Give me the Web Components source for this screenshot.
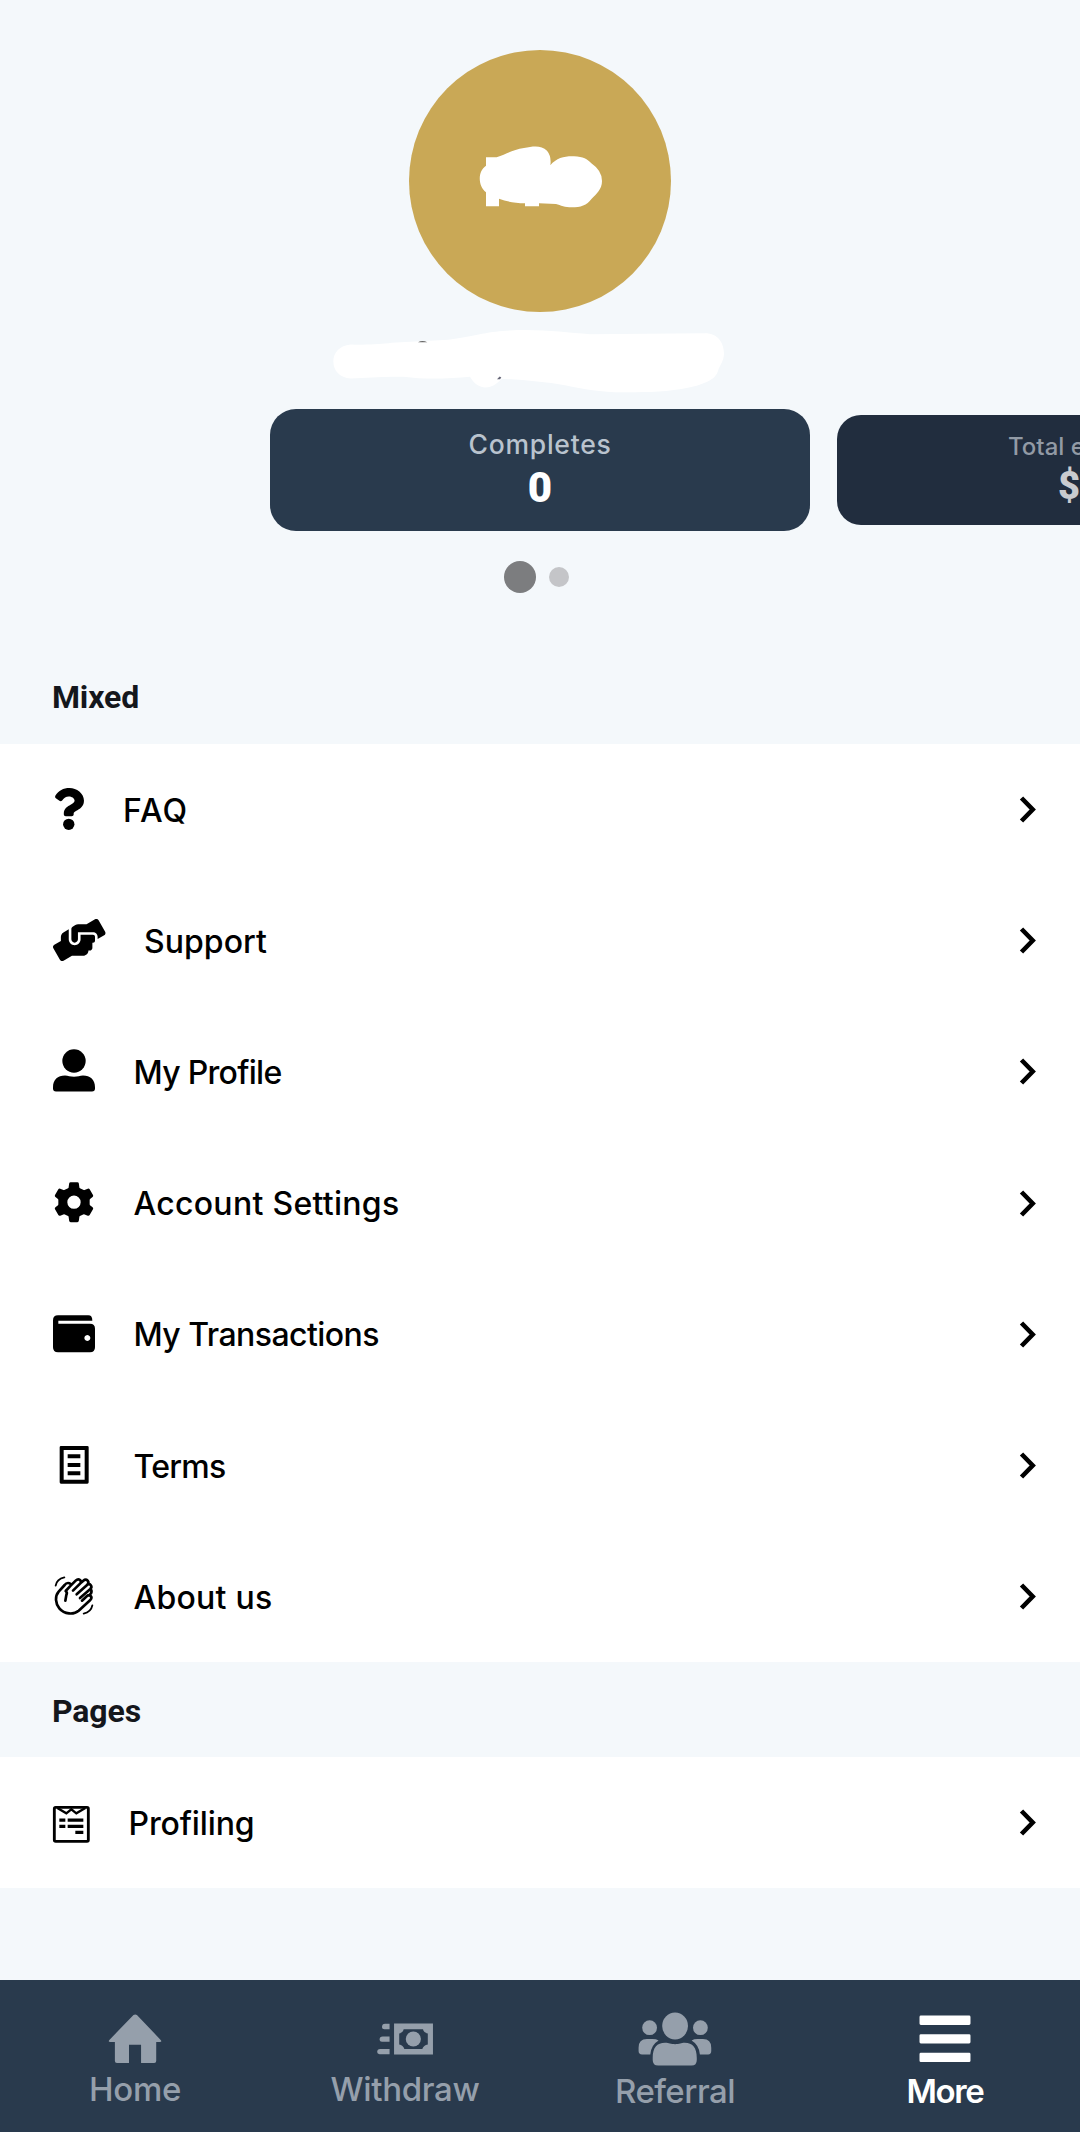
<!DOCTYPE html>
<html lang="en">
<head>
<meta charset="utf-8">
<title>More</title>
<style>
html,body{margin:0;padding:0}
body{width:1080px;height:2132px;overflow:hidden;background:#f4f8fb;font-family:Inter,"Liberation Sans",sans-serif;color:#000}
</style>
</head>
<body>
<more-page></more-page>
<script>
const TOOTH = 'd="M-17-38L-14.500-56Q-14-60-10-60H10Q14-60 14.500-56L17-38L8-28H-8Z"';
const ICONS = {
  faq: [31.5, 42, '0 0 384 512', '<path d="M202 0C122.200 0 70.500 32.700 29.900 91c-7.400 10.600-5.100 25.100 5.200 32.900l43.100 32.700c10.400 7.900 25.100 6 33.300-4.100 25-31.400 43.600-49.500 82.700-49.500 30.800 0 68.800 19.800 68.800 49.600 0 22.600-18.600 34.200-49 51.200-35.400 19.900-82.300 44.600-82.300 106.400V320c0 13.300 10.700 24 24 24h72.500c13.300 0 24-10.700 24-24v-5.800c0-42.800 125.300-44.600 125.300-160.600C377.500 66.300 286.900 0 202 0z"/><circle cx="192" cy="442.700" r="69.300"/>'],
  support: [52.5, 42, '0 0 640 512', '<path d="M488 192H336v56c0 39.700-32.300 72-72 72s-72-32.300-72-72V126.400l-64.900 39C107.800 176.900 96 197.800 96 220.200v47.300l-80 46.200C.7 322.500-4.600 342.100 4.300 357.400l80 138.600c8.800 15.300 28.400 20.500 43.700 11.700L231.400 448H368c35.300 0 64-28.700 64-64h16c17.700 0 32-14.300 32-32v-64h8c13.300 0 24-10.700 24-24v-48c0-13.300-10.700-24-24-24zm147.700-37.400L555.700 16C546.900.7 527.300-4.500 512 4.300L408.600 64H306.400c-12 0-23.700 3.400-33.900 9.700L239 94.600c-9.400 5.800-15 16.100-15 27.100V248c0 22.100 17.900 40 40 40s40-17.900 40-40v-88h184c30.900 0 56 25.100 56 56v28.500l80-46.200c15.300-8.900 20.500-28.400 11.700-43.700z"/>'],
  profile: [42, 42, '69 91.500 126 126', '<circle cx="132" cy="124.500" r="35"/><path d="M69 203c0-22 14-35 36-35 9 0 16 4 27 4s18-4 27-4c22 0 36 13 36 35v4q0 9-9 9H78q-9 0-9-9z"/>'],
  settings: [42, 42, '69 485 126 126', `<g transform="translate(132 545.500)"><path fill-rule="evenodd" d="M-47-28L0-50L47-28V28L0 50L-47 28ZM0-20A20 20 0 1 0 0 20A20 20 0 1 0 0-20Z"/>${[0,60,120,180,240,300].map(a => `<path transform="rotate(${a})" ${TOOTH}/>`).join('')}</g>`],
  wallet: [42, 42, '69 879 126 126', '<path fill-rule="evenodd" d="M84 886H175Q187 886 187 902H85V911H180Q195 911 195 926V982Q195 997 180 997H84Q69 997 69 982V901Q69 886 84 886ZM172 945a9 9 0 1 0 .1 0Z"/>'],
  terms: [42, 42, '69 102 126 126', '<path fill-rule="evenodd" d="M93 108H172Q176 108 176 112V217Q176 221 172 221H93Q89 221 89 217V112Q89 108 93 108ZM101 120V209H164V120ZM113 133h38v12h-38ZM113 159h38v12h-38ZM113 184h38v12h-38Z"/>'],
  about: [42, 42, '69 496 126 126', '<g fill="none" stroke="#000" stroke-width="8" stroke-linecap="round" stroke-linejoin="round"><path d="M106 573L109 556Q113 549 107 544L122 528Q123 520 114 520Q108 520 104 526L86 546C74 560 76 581 88 596C103 614 131 616 146 603L181 571Q187 564 182 559Q177 554 171 559L156 573M122 528L137 513Q144 506 150 511Q155 516 151 521L129 543M151 521L160 513Q167 507 173 513Q178 519 172 525L140 554M172 525Q178 521 182 526Q187 532 181 538L150 565M181 538Q187 543 183 551L177 557"/><path stroke-width="5.500" d="M77 528Q80 508 103 503M187 587Q183 607 161 612"/></g>'],
  profiling: [37, 37, '69 191 111 111', '<g fill="none" stroke="#000"><rect x="73" y="201" width="102" height="102" rx="4" stroke-width="8.500"/><path stroke-width="7" d="M82 203L109 219L124 207L139 219L166 203"/><path stroke-width="9.500" d="M88 239.500h18M113 239.500h47M88 258h18M113 258h47M136 276h24"/></g>'],
  home: [54, 54, '316 156 156.800 156.800', '<path d="M390 165q5-4 10 0L469 237q5 6-3 6H456V298q0 6-6 6H412V251H377V304H342q-6 0-6-6V243H323q-8 0-3-6Z"/>'],
  withdraw: [56, 54, '1094.500 158.600 162.600 156.800', '<path fill-rule="evenodd" d="M1144 192h113v90h-113ZM1172 209Q1170 219 1159 221V253Q1170 255 1174 266H1226Q1230 255 1242 253V221Q1230 219 1228 209Z"/><circle cx="1200" cy="237" r="22"/><path d="M1131 193v16h-15q-7 0-7-6 0-10 9-10ZM1131 230v15h-22q-7 0-7-6 0-9 9-9ZM1131 266v15h-29q-7 0-7-6 0-9 9-9Z"/>'],
  referral: [74, 54, '285.300 158.500 214.900 156.800', '<ellipse cx="393" cy="199" rx="37.500" ry="39"/><circle cx="319" cy="204" r="21.500"/><circle cx="466.500" cy="204" r="21.500"/><path d="M328 292C328 262 340 248 364 248 376 248 380 252 393 252S410 248 421 248C444 248 456 262 456 292V298Q456 314 441 314H344Q328 314 328 298ZM345 241Q323 254 321 282H297Q287 282 287 272V262Q287 237 311 237H328Q338 237 345 241ZM441 241Q463 254 465 282H489Q498 282 498 272V262Q498 237 474 237H458Q448 237 441 241Z"/>'],
  more: [54, 54, '1098.600 158.600 156.800 156.800', '<path d="M1107 169h140q4 0 4 4v19q0 4-4 4h-140q-4 0-4-4v-19q0-4 4-4ZM1107 223h140q4 0 4 4v19q0 4-4 4h-140q-4 0-4-4v-19q0-4 4-4ZM1107 277h140q4 0 4 4v19q0 4-4 4h-140q-4 0-4-4v-19q0-4 4-4Z"/>']
};
const define = (name, render) => customElements.define(name, class extends HTMLElement {
  connectedCallback() {
    if (this.shadowRoot) return;
    this.attachShadow({mode: 'open'}).innerHTML = render(this);
  }
});

define('app-icon', el => {
  const [w, h, box, body] = ICONS[el.getAttribute('name')];
  return `<style>:host{display:block;flex:none}svg{display:block;fill:currentColor;overflow:visible}</style>
  <svg width="${w}" height="${h}" viewBox="${box}" preserveAspectRatio="xMidYMid meet">${body}</svg>`;
});

/* Text whose tracking is tuned so that its line has the width given in "w". */
customElements.define('fit-text', class extends HTMLElement {
  connectedCallback() {
    if (this.shadowRoot) return;
    const text = this.getAttribute('text'), w = +this.getAttribute('w');
    this.attachShadow({mode: 'open'}).innerHTML = `<style>:host{display:block}span{display:inline-block;white-space:pre}</style><span></span>`;
    const s = this.shadowRoot.querySelector('span');
    s.textContent = text;
    const natural = s.getBoundingClientRect().width;
    s.style.letterSpacing = ((w - natural) / text.length).toFixed(3) + 'px';
  }
});

define('user-avatar', () => `<style>:host{display:block;width:262px;height:262px;border-radius:50%;background:#c9a856}svg{display:block}</style>
  <svg width="262" height="262" viewBox="267 57 786 786" fill="#fff"><path d="M498 379H530C560 369 580 355 612 351C640 345 664 342 681 359Q695 376 691 403C710 380 735 375 762 376C790 377 802 385 814 397Q846 419 846 450C846 475 829 490 815 503C800 523 782 529 755 529C735 529 722 523 708 519L657 517V526H615V517C585 516 560 512 537 503V526H498V484C474 466 472 421 498 404Z"/></svg>`);

define('user-name', () => `<style>:host{display:block;height:97px}svg{display:block}</style>
  <svg width="1080" height="97" viewBox="-960 844.500 3240 291"><path fill="#fff" d="M92 942C145 944 185 941 215 937L385 928C470 915 510 902 570 900C665 895 735 907 810 911L1155 908C1194 908 1212 937 1212 970C1211 990 1203 1000 1196 1015C1190 1038 1180 1050 1130 1066C1060 1084 990 1086 920 1085C845 1086 795 1076 735 1064C675 1055 610 1047 545 1045C526 1065 511 1072 494 1071C473 1069 460 1056 450 1039C390 1044 320 1048 250 1039C190 1037 145 1042 92 1044C59 1042 40 1020 40 993S59 945 92 942Z"/><path d="M294 935q13-7 28 0Z" fill="#666"/><path d="M531 1046l8-8 5 3-4 5Z" fill="#667"/></svg>`);

define('stat-card', el => `<style>
  :host{display:flex;flex-direction:column;align-items:center;flex:none;box-sizing:border-box;width:540px;height:122px;border-radius:26px;background:#293a4d;color:#fff;padding-top:19px}
  :host([small]){width:486px;height:110px;border-radius:24px;background:#212d3e;color:#c9cbcf;padding-top:17px}
  .l{font-size:26.500px;line-height:32px;font-weight:500;color:#b9c3ce}.v{font:900 42px/50px Roboto,sans-serif;margin-top:3px}
  :host([small]) .l{font-size:24px;line-height:29px;color:#929aa5}:host([small]) .v{font-size:38px;line-height:45px}
  </style><div class="l"><fit-text text="${el.getAttribute('label')}" w="${el.getAttribute('w')}"></fit-text></div><div class="v"><slot></slot></div>`);

define('stat-carousel', () => `<style>:host{display:block}.row{display:flex;align-items:center;gap:27px;padding-left:270px;overflow:hidden}
  .dots{display:flex;align-items:center;justify-content:center;gap:13.500px;height:32px;margin-top:30px;padding-right:7px}
  i{width:20px;height:20px;border-radius:50%;background:#c4c5c8}i.on{width:32px;height:32px;background:#7c7d7f}</style>
  <div class="row"><slot></slot></div><div class="dots"><i class="on"></i><i></i></div>`);

define('section-title', el => `<style>:host{display:flex;align-items:center;box-sizing:border-box;height:95px;padding:${el.getAttribute('top') || 3}px 0 0 52px;font:700 32px/38px Roboto,sans-serif;color:#14171c}</style><fit-text text="${el.getAttribute('label')}" w="${el.getAttribute('w')}"></fit-text>`);

define('menu-item', el => `<style>:host{display:flex;align-items:center;box-sizing:border-box;height:131.200px;padding:0 40px 0 52.500px;background:#fff}
  .t{margin-left:39px;flex:1;font-size:32px;line-height:40px;font-weight:500;padding-top:3px}svg{display:block;margin-right:3.500px}</style>
  <app-icon name="${el.getAttribute('icon')}"></app-icon><div class="t"><fit-text text="${el.getAttribute('label')}" w="${el.getAttribute('w')}"></fit-text></div>
  <svg width="18" height="28" viewBox="0 0 18 28"><path d="M2.500 3L13.700 14.500L2.500 26" fill="none" stroke="#000" stroke-width="4.600"/></svg>`);

define('nav-item', el => `<style>:host{display:flex;flex-direction:column;align-items:center;flex:1;color:#959fab;padding-top:32px;box-sizing:border-box}:host([active]){color:#fff}
  .t{font-size:33px;line-height:40px;font-weight:500;margin-top:${el.getAttribute('drop') || 3}px}:host([active]) .t{font-weight:600}</style>
  <app-icon name="${el.getAttribute('icon')}"></app-icon><div class="t"><fit-text text="${el.getAttribute('label')}" w="${el.getAttribute('w')}"></fit-text></div>`);

define('bottom-nav', () => `<style>:host{display:flex;height:152px;background:#293a4d}</style><slot></slot>`);

define('more-page', () => `<style>:host{display:flex;flex-direction:column;width:1080px;height:2132px}
  header{display:flex;flex-direction:column;align-items:center;padding-top:49.500px;height:599px}user-name,stat-carousel{width:1080px}
  bottom-nav{margin-top:auto}</style>
  <header><user-avatar></user-avatar><user-name></user-name>
  <stat-carousel><stat-card label="Completes" w="143">0</stat-card><stat-card small label="Total earned" w="144">$0</stat-card></stat-carousel></header>
  <section-title label="Mixed" w="87" top="1"></section-title>
  <menu-item icon="faq" label="FAQ" w="65"></menu-item>
  <menu-item icon="support" label="Support" w="123"></menu-item>
  <menu-item icon="profile" label="My Profile" w="148"></menu-item>
  <menu-item icon="settings" label="Account Settings" w="266"></menu-item>
  <menu-item icon="wallet" label="My Transactions" w="245.500"></menu-item>
  <menu-item icon="terms" label="Terms" w="92"></menu-item>
  <menu-item icon="about" label="About us" w="139"></menu-item>
  <section-title label="Pages" w="89"></section-title>
  <menu-item icon="profiling" label="Profiling" w="126"></menu-item>
  <bottom-nav><nav-item icon="home" label="Home" w="92"></nav-item><nav-item icon="withdraw" label="Withdraw" w="149"></nav-item><nav-item icon="referral" label="Referral" w="120" drop="4.500"></nav-item><nav-item icon="more" label="More" w="77" drop="4.500" active></nav-item></bottom-nav>`);
</script>
</body>
</html>
